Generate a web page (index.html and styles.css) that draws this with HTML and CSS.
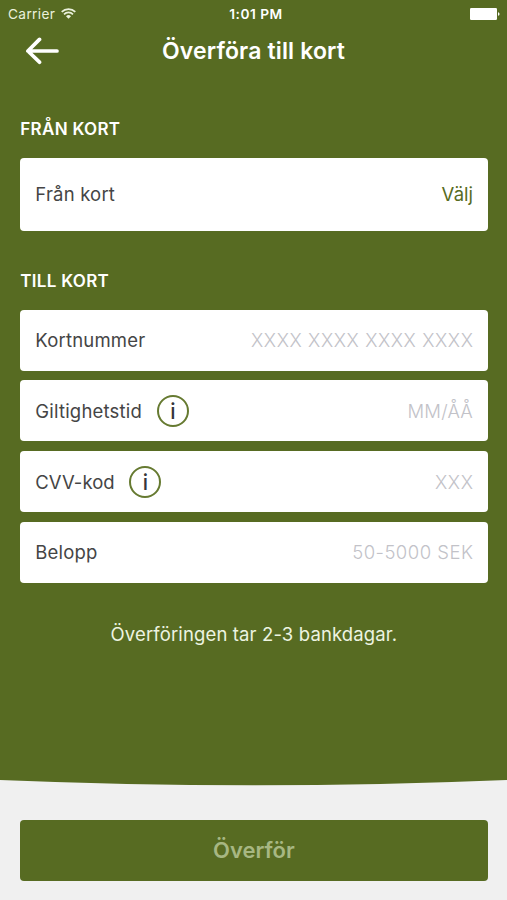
FILE: index.html
```html
<!DOCTYPE html>
<html lang="sv">
<head>
<meta charset="utf-8">
<title>Överföra till kort</title>
<link rel="stylesheet" href="styles.css">
</head>
<body>
<div class="screen">
  <div class="status">
    <div class="carrier"><span class="carrier-name">Carrier</span>
      <svg class="wifi" width="15" height="11" viewBox="0 0 15 11" fill="none" stroke="currentColor" stroke-width="1.7"><path d="M.7 3.9a9.7 9.7 0 0 1 13.6 0M3 6.3a6.4 6.4 0 0 1 9 0"/><path d="M7.5 10.7 5 8.2a3.6 3.6 0 0 1 5 0z" fill="currentColor" stroke="none"/></svg>
    </div>
    <span class="time">1:01 PM</span>
    <svg class="battery" width="30" height="12" viewBox="0 0 30 12" fill="currentColor"><rect width="27" height="12" rx="1.2"/><path d="M28 4.2c2 .5 2 3.100 0 3.600z"/></svg>
  </div>
  <header class="nav">
    <svg class="back" width="34" height="28" viewBox="0 0 34 28" fill="none" stroke="currentColor" stroke-width="3.700" stroke-linecap="round" stroke-linejoin="round"><path d="M32 14H3M14.500 2.400 2.900 14 14.500 25.200"/></svg>
    <h1 class="title">Överföra till kort</h1>
  </header>
  <main class="form">
    <h2 class="heading heading-from">FRÅN KORT</h2>
    <div class="row row-tall"><span class="label from">Från kort</span><span class="value pick">Välj</span></div>
    <h2 class="heading heading-to">TILL KORT</h2>
    <div class="fields">
      <div class="row"><span class="label number">Kortnummer</span><span class="value number-hint">XXXX XXXX XXXX XXXX</span></div>
      <div class="row"><span class="label expiry">Giltighetstid</span><span class="info">i</span><span class="value expiry-hint">MM/ÅÅ</span></div>
      <div class="row"><span class="label cvv">CVV-kod</span><span class="info">i</span><span class="value cvv-hint">XXX</span></div>
      <div class="row"><span class="label amount">Belopp</span><span class="value amount-hint">50-5000 SEK</span></div>
    </div>
    <p class="note">Överföringen tar 2-3 bankdagar.</p>
  </main>
  <svg class="curve" width="507" height="6" viewBox="0 0 507 6"><path d="M0 0Q253.500 10.500 507 0z" fill="#576b22"/></svg>
  <footer class="footer"><button class="submit" disabled>Överför</button></footer>
</div>
</body>
</html>
```
FILE: styles.css
```css
* { box-sizing: border-box; }
body { margin: 0; background: #f0f0f0; font-family: Inter, "Liberation Sans", sans-serif; }
h1, h2, p { margin: 0; }
.screen { width: 507px; height: 900px; display: flex; flex-direction: column; overflow: hidden; }
.status { height: 28px; flex: none; background: #576b22; color: #fff; display: grid; grid-template-columns: 1fr auto 1fr; align-items: center; padding: 0 7px 0 8px; font-size: 13.700px; }
.carrier { display: flex; align-items: center; gap: 5.500px; color: #eaf1dc; }
.carrier-name { letter-spacing: .35px; }
.wifi { margin-top: -2px; }
.time { font-weight: 600; letter-spacing: .5px; position: relative; left: 2px; }
.battery { justify-self: end; margin-top: -1px; }
.nav { height: 46px; flex: none; background: #576b22; color: #fff; display: grid; grid-template-columns: 34px 1fr 34px; padding: 0 25px; align-items: center; }
.title { font-size: 23px; font-weight: 600; text-align: center; letter-spacing: .15px; }
.form { height: 706px; flex: none; background: #576b22; padding: 0 19.500px 0 20.300px; }
.heading { color: #fff; font-size: 17px; font-weight: 600; line-height: 20px; letter-spacing: .3px; white-space: nowrap; }
.heading-from { padding-top: 45px; margin-bottom: 18.500px; }
.heading-to { margin-top: 39.500px; margin-bottom: 19px; }
.row { height: 61.200px; background: #fff; border-radius: 4px; display: flex; align-items: center; padding: 0 14.500px 0 15px; font-size: 18.500px; color: #454545; white-space: nowrap; }
.row-tall { height: 73.500px; }
.fields { display: flex; flex-direction: column; gap: 9.600px; }
.label { letter-spacing: .2px; }
.cvv { letter-spacing: .05px; }
.value { margin-left: auto; color: #c2c2c8; font-weight: 300; }
.number-hint { letter-spacing: .58px; margin-right: -.5px; }
.expiry-hint { letter-spacing: .2px; }
.cvv-hint { letter-spacing: .6px; margin-right: -.5px; }
.amount-hint { letter-spacing: .48px; margin-right: -.4px; }
.pick { color: #576b22; font-weight: 400; }
.info { width: 32px; height: 32px; margin-left: 14.800px; padding-top: 1px; border: 2px solid #667a31; border-radius: 50%; display: flex; align-items: center; justify-content: center; font-size: 21px; font-weight: 500; color: #35363a; }
.note { color: #edf4e1; font-size: 18.500px; line-height: 24px; text-align: center; letter-spacing: .13px; margin-top: 39px; }
.curve { display: block; flex: none; }
.footer { padding: 33.500px 19.500px 0 20.300px; }
.submit { display: block; width: 100%; height: 61px; border: 0; border-radius: 4px; background: #576b22; color: #a7b783; font: 600 22px Inter, sans-serif; padding: 0; }
```
